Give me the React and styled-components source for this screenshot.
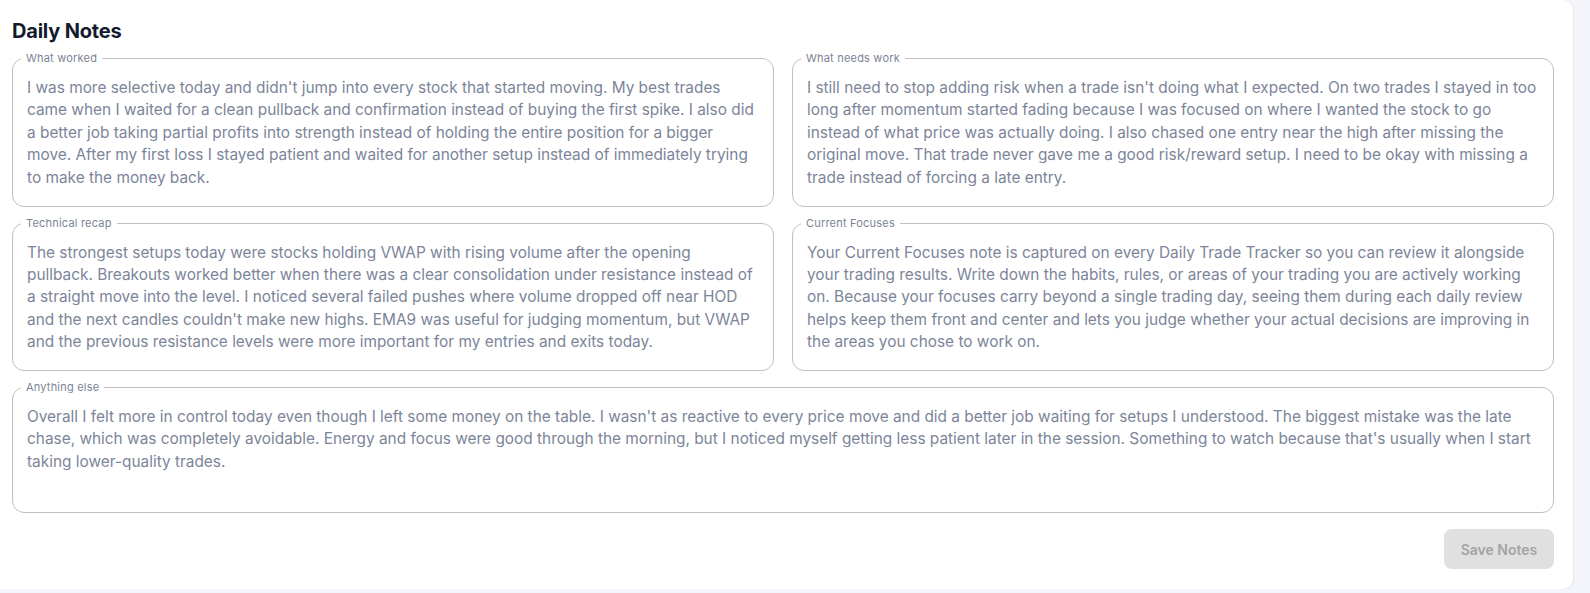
import React from 'react';
import styled, { createGlobalStyle } from 'styled-components';

const GlobalStyle = createGlobalStyle`
  html, body {
    margin: 0;
    padding: 0;
    background: #f4f5fa;
    font-family: Inter, 'Liberation Sans', sans-serif;
  }
  * { box-sizing: border-box; }
`;

const notes = [
  {
    label: 'What worked',
    text: "I was more selective today and didn't jump into every stock that started moving. My best trades came when I waited for a clean pullback and confirmation instead of buying the first spike. I also did a better job taking partial profits into strength instead of holding the entire position for a bigger move. After my first loss I stayed patient and waited for another setup instead of immediately trying to make the money back.",
  },
  {
    label: 'What needs work',
    text: "I still need to stop adding risk when a trade isn't doing what I expected. On two trades I stayed in too long after momentum started fading because I was focused on where I wanted the stock to go instead of what price was actually doing. I also chased one entry near the high after missing the original move. That trade never gave me a good risk/reward setup. I need to be okay with missing a trade instead of forcing a late entry.",
  },
  {
    label: 'Technical recap',
    text: "The strongest setups today were stocks holding VWAP with rising volume after the opening pullback. Breakouts worked better when there was a clear consolidation under resistance instead of a straight move into the level. I noticed several failed pushes where volume dropped off near HOD and the next candles couldn't make new highs. EMA9 was useful for judging momentum, but VWAP and the previous resistance levels were more important for my entries and exits today.",
  },
  {
    label: 'Current Focuses',
    text: 'Your Current Focuses note is captured on every Daily Trade Tracker so you can review it alongside your trading results. Write down the habits, rules, or areas of your trading you are actively working on. Because your focuses carry beyond a single trading day, seeing them during each daily review helps keep them front and center and lets you judge whether your actual decisions are improving in the areas you chose to work on.',
  },
];

const anythingElse = {
  label: 'Anything else',
  text: "Overall I felt more in control today even though I left some money on the table. I wasn't as reactive to every price move and did a better job waiting for setups I understood. The biggest mistake was the late chase, which was completely avoidable. Energy and focus were good through the morning, but I noticed myself getting less patient later in the session. Something to watch because that's usually when I start taking lower-quality trades.",
};

function NoteField({ label, text, rows = 4 }) {
  return (
    <Field>
      <Legend>{label}</Legend>
      <Body $rows={rows}>{text}</Body>
    </Field>
  );
}

function App() {
  return (
    <>
      <GlobalStyle />
      <Card>
        <Title>Daily Notes</Title>
        <Grid>
          {notes.map((n) => (
            <NoteField key={n.label} label={n.label} text={n.text} />
          ))}
          <Wide>
            <NoteField label={anythingElse.label} text={anythingElse.text} />
          </Wide>
        </Grid>
        <Actions>
          <SaveButton disabled>Save Notes</SaveButton>
        </Actions>
      </Card>
    </>
  );
}

const Card = styled.section`
  width: 1573px;
  background: #fff;
  border-radius: 0 10px 10px 0;
  box-shadow: 0 1px 2px rgba(30, 40, 80, 0.08), 1px 0 0 #eceef4;
  padding: 18px 19px 20px 12px;
`;

const Title = styled.h2`
  margin: 0 0 8px;
  font-size: 20px;
  line-height: 26px;
  font-weight: 700;
  color: #131a2e;
  letter-spacing: -0.2px;
`;

const Grid = styled.div`
  display: grid;
  grid-template-columns: 1fr 1fr;
  column-gap: 18px;
  row-gap: 10px;
`;

const Wide = styled.div`
  grid-column: 1 / -1;
`;

const Field = styled.fieldset`
  margin: 0;
  min-width: 0;
  border: 1px solid #bfbfc4;
  border-radius: 12px;
  padding: 12px 13px 16.5px 14px;
`;

const Legend = styled.legend`
  margin-left: -6px;
  padding: 0 5px;
  font-size: 11px;
  line-height: 13px;
  letter-spacing: 0.2px;
  color: #7c8496;
`;

const Body = styled.div`
  font-size: 15.4px;
  line-height: 22.4px;
  color: #7c8599;
  min-height: ${(p) => p.$rows * 22.4}px;
  white-space: pre-wrap;
`;

const Actions = styled.div`
  display: flex;
  justify-content: flex-end;
  margin-top: 16px;
`;

const SaveButton = styled.button`
  width: 110px;
  height: 40px;
  border: none;
  border-radius: 8px;
  background: #e0e0e0;
  color: #a4a4a4;
  font-family: Inter, 'Liberation Sans', sans-serif;
  font-size: 14px;
  font-weight: 600;
  cursor: default;
`;

export default App;
